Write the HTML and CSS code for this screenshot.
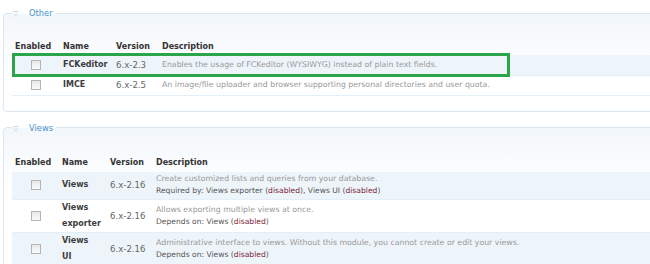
FILE: index.html
```html
<!DOCTYPE html>
<html lang="en">
<head>
    <meta charset="UTF-8">
    <title>Modules</title>
    <link rel="stylesheet" href="styles.css">
</head>
<body>
    <fieldset class="group">
        <legend><span class="toggle">&#9661;</span> Other</legend>
        <div class="table-wrap">
            <table class="modules other">
                <thead>
                    <tr><th>Enabled</th><th>Name</th><th>Version</th><th>Description</th></tr>
                </thead>
                <tbody>
                    <tr class="odd row-1">
                        <td class="check"><span class="box"></span></td>
                        <td class="name">FCKeditor</td>
                        <td class="version">6.x-2.3</td>
                        <td class="desc">Enables the usage of FCKeditor (WYSIWYG) instead of plain text fields.</td>
                    </tr>
                    <tr class="even row-1">
                        <td class="check"><span class="box"></span></td>
                        <td class="name">IMCE</td>
                        <td class="version">6.x-2.5</td>
                        <td class="desc">An image/file uploader and browser supporting personal directories and user quota.</td>
                    </tr>
                </tbody>
            </table>
            <div class="highlight"></div>
        </div>
    </fieldset>

    <fieldset class="group second">
        <legend><span class="toggle">&#9661;</span> Views</legend>
        <table class="modules views">
            <thead>
                <tr><th>Enabled</th><th>Name</th><th>Version</th><th>Description</th></tr>
            </thead>
            <tbody>
                <tr class="odd r-views">
                    <td class="check"><span class="box"></span></td>
                    <td class="name">Views</td>
                    <td class="version">6.x-2.16</td>
                    <td class="desc">Create customized lists and queries from your database.
                        <div class="deps">Required by: Views exporter (<span class="off">disabled</span>), Views UI (<span class="off">disabled</span>)</div>
                    </td>
                </tr>
                <tr class="even r-exp">
                    <td class="check"><span class="box"></span></td>
                    <td class="name">Views<br>exporter</td>
                    <td class="version">6.x-2.16</td>
                    <td class="desc">Allows exporting multiple views at once.
                        <div class="deps">Depends on: Views (<span class="off">disabled</span>)</div>
                    </td>
                </tr>
                <tr class="odd r-ui">
                    <td class="check"><span class="box"></span></td>
                    <td class="name">Views<br>UI</td>
                    <td class="version">6.x-2.16</td>
                    <td class="desc">Administrative interface to views. Without this module, you cannot create or edit your views.
                        <div class="deps">Depends on: Views (<span class="off">disabled</span>)</div>
                    </td>
                </tr>
            </tbody>
        </table>
    </fieldset>
</body>
</html>
```

FILE: styles.css
```css
body {
    margin: 0;
    padding: 0;
    width: 720px;
    font-family: "DejaVu Sans", Verdana, sans-serif;
    font-size: 8px;
    color: #494949;
    background: #fff;
    overflow: hidden;
}
.group {
    margin: 8px 0 0 3px;
    padding: 20px 0 15px 8px;
    border: 1px solid #dbe6ee;
    border-radius: 4px;
    background: linear-gradient(#f2f7fb, #fff 60px);
}
.group.second {
    margin-top: 11px;
}
.group legend {
    padding: 0 3px 0 1px;
    margin-left: 0;
    color: #4a93cc;
    font-size: 8.3px;
}
.toggle {
    color: #a8bfd2;
    font-size: 7px;
    margin-right: 8px;
}
.table-wrap {
    position: relative;
}
.modules {
    border-collapse: collapse;
    width: 100%;
}
.modules th {
    height: 17px;
    text-align: left;
    font-weight: bold;
    font-size: 8px;
    color: #333;
    padding: 0 0 0 3px;
    vertical-align: middle;
}
.views th {
    height: 19px;
}
.modules td {
    padding: 0 0 0 3px;
    vertical-align: middle;
}
.modules tbody tr {
    border-bottom: 1px solid #e3eef6;
}
.modules tr.odd {
    background: #edf4fa;
}
.modules tr.even {
    background: #fff;
}
.row-1 {
    height: 20px;
}
.modules .check {
    text-align: center;
    padding: 0;
}
.box {
    display: inline-block;
    width: 8px;
    height: 8px;
    border: 1px solid #b5b5b5;
    background: linear-gradient(#e8e8e8, #fafafa);
    vertical-align: middle;
}
.name {
    font-weight: bold;
    font-size: 8px;
    color: #3d3d3d;
    line-height: 16px;
}
.version {
    color: #666;
    font-size: 8.6px;
}
.desc {
    color: #999;
    font-size: 7.8px;
    line-height: 12px;
}
.deps {
    color: #555;
    font-size: 7.6px;
}
.off {
    color: #7e2436;
}
.other th:nth-child(1) { width: 45px; }
.other th:nth-child(2) { width: 50px; }
.other th:nth-child(3) { width: 43px; }
.views th:nth-child(1) { width: 44px; }
.views th:nth-child(2) { width: 45px; }
.views th:nth-child(3) { width: 43px; }
.r-views { height: 28px; }
.r-exp { height: 32px; }
.r-ui { height: 32px; }
.highlight {
    position: absolute;
    left: 0;
    top: 15px;
    width: 492px;
    height: 18px;
    border: 3px solid #2aa54a;
}
```
